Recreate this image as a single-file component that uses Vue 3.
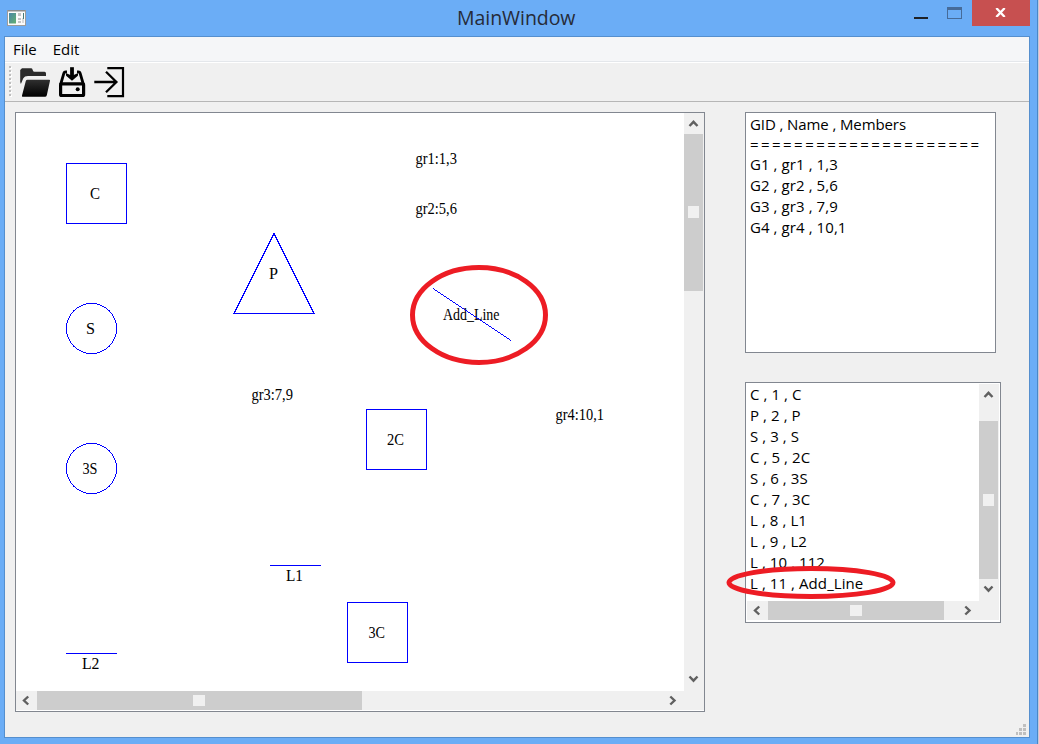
<script setup>
const groups = [
  { text: 'GID , Name , Members', kind: 'head' },
  { text: '=====================', kind: 'rule' },
  { text: 'G1 , gr1 , 1,3', kind: 'row' },
  { text: 'G2 , gr2 , 5,6', kind: 'row' },
  { text: 'G3 , gr3 , 7,9', kind: 'row' },
  { text: 'G4 , gr4 , 10,1', kind: 'row' },
]

const objects = [
  'C , 1 , C',
  'P , 2 , P',
  'S , 3 , S',
  'C , 5 , 2C',
  'S , 6 , 3S',
  'C , 7 , 3C',
  'L , 8 , L1',
  'L , 9 , L2',
  'L , 10 , 112',
  'L , 11 , Add_Line',
]

const squares = [
  { x: 66.5, y: 163.5 },
  { x: 366.5, y: 409.5 },
  { x: 347.5, y: 602.5 },
]

const circles = [
  { x: 91.5, y: 328.5 },
  { x: 91.5, y: 468.5 },
]

const labels = [
  { text: 'C', x: 90, y: 199, w: 10 },
  { text: 'S', x: 86, y: 334, w: 9 },
  { text: 'P', x: 269, y: 279, w: 9 },
  { text: '3S', x: 82.5, y: 474, w: 15 },
  { text: '2C', x: 387, y: 445, w: 17 },
  { text: '3C', x: 368.5, y: 638, w: 16.5 },
  { text: 'L1', x: 286, y: 581, w: 17 },
  { text: 'L2', x: 82, y: 669, w: 17.5 },
  { text: 'gr1:1,3', x: 415.5, y: 164, w: 41.5 },
  { text: 'gr2:5,6', x: 415.5, y: 214, w: 41.5 },
  { text: 'gr3:7,9', x: 251.5, y: 400, w: 41.5 },
  { text: 'gr4:10,1', x: 555.5, y: 420, w: 48.5 },
  { text: 'Add_Line', x: 443, y: 320, w: 56.5 },
]
</script>

<template>
  <div class="window">
    <header class="titlebar">
      <svg class="app-icon" width="19" height="16" viewBox="0 0 19 16">
        <defs>
          <linearGradient id="pane" x1="0" y1="0" x2="1" y2="1">
            <stop offset="0" stop-color="#4a86a8" />
            <stop offset="1" stop-color="#62b070" />
          </linearGradient>
        </defs>
        <rect x="0.5" y="0.5" width="18" height="15" fill="#fbfbfb" stroke="#9b9b9b" />
        <rect x="1" y="0" width="17" height="1.5" fill="#8c8c8c" />
        <rect x="2" y="3" width="7" height="10.5" fill="url(#pane)" />
        <rect x="11" y="3" width="3" height="3" fill="#c4c4c4" />
        <rect x="11" y="8" width="3" height="2" fill="#c4c4c4" />
        <rect x="11" y="11" width="3" height="2" fill="#c4c4c4" />
        <rect x="15" y="8" width="2" height="5" fill="#dadada" />
        <rect x="16" y="3" width="1" height="6" fill="#467a78" />
      </svg>
      <h1 class="title">MainWindow</h1>
      <div class="controls">
        <i class="minimize"></i>
        <i class="maximize"></i>
        <div class="close">
          <svg width="11" height="9" viewBox="0 0 11 9"><path d="M1.3 0L9.7 9M9.7 0L1.3 9" stroke="#fff" stroke-width="2.3" /></svg>
        </div>
      </div>
    </header>

    <div class="client">
      <nav class="menubar"><span>File</span><span class="edit">Edit</span></nav>
      <div class="toolbar">
        <svg width="130" height="38" viewBox="5 63 130 38">
          <defs>
            <linearGradient id="folder" x1="0" y1="0" x2="0" y2="1">
              <stop offset="0" stop-color="#303030" />
              <stop offset="1" stop-color="#000" />
            </linearGradient>
          </defs>
          <g v-for="n in 8" :key="n">
            <rect x="10" :y="63 + n * 4" width="2" height="2" fill="#fff" />
            <rect x="9" :y="62 + n * 4" width="2" height="2" fill="#bebebe" />
          </g>
          <path d="M20.2 70L22 68.3H31.3Q32.3 68.3 32.8 70.2Q33.2 71.8 34.5 71.8H44.5Q46 71.8 46 73.5V76H28Q24.5 76 23.3 78.3L20.9 84L20.2 82Z" fill="#2b2b2b" />
          <path d="M27.5 79.7H49.2Q50.3 79.7 50 80.8L46.8 95.2Q46.4 96.7 45 96.7H22.8Q21.6 96.7 22 95.4L25.8 81Q26.2 79.7 27.5 79.7Z" fill="url(#folder)" />
          <g fill="none" stroke="#000">
            <path d="M67 71.9H65.6Q64.2 71.9 63.9 73.2L60.6 84.5M77 71.9H78.4Q79.8 71.9 80.1 73.2L83.4 84.5" stroke-width="2.8" />
            <rect x="60.6" y="83.9" width="23" height="11.6" rx="1" stroke-width="3.2" />
            <path d="M72 67.2V77" stroke-width="3.8" />
          </g>
          <path d="M65.8 73L72 75.8L78.2 73L77.9 75.8L72 80.8L66.1 75.8Z" fill="#000" />
          <circle cx="77.7" cy="89.3" r="2" fill="#000" />
          <g fill="none" stroke="#000">
            <path d="M94.3 82H116.5M106 71.8L116.4 82L106 92.2" stroke-width="2.3" />
            <path d="M107.3 68.1H123V96.1H107.3" stroke-width="2.2" />
          </g>
        </svg>
      </div>

      <main class="workspace">
        <section class="canvas frame">
          <svg class="scene" width="668" height="578" viewBox="16 113 668 578">
            <g class="shapes">
              <rect v-for="(s, i) in squares" :key="'s' + i" :x="s.x" :y="s.y" width="60" height="60" />
              <circle v-for="(c, i) in circles" :key="'c' + i" :cx="c.x" :cy="c.y" r="25" />
              <path d="M274 233.5L314 313.5H234Z" />
              <path d="M270 565.5H321M66 653.5H117" />
            </g>
            <text
              v-for="l in labels"
              :key="l.text"
              class="label"
              :x="l.x"
              :y="l.y"
              :textLength="l.w"
              lengthAdjust="spacingAndGlyphs"
            >{{ l.text }}</text>
            <path class="shapes" d="M433 288.5L511 340.5" />
          </svg>
          <div class="vbar">
            <svg class="arrow" width="19" height="21"><path d="M5.5 13L9.5 8.8L13.5 13" /></svg>
            <div class="vthumb"><i></i></div>
            <svg class="arrow end" width="19" height="21"><path d="M5.5 6.5L9.5 10.7L13.5 6.5" /></svg>
          </div>
          <div class="hbar">
            <svg class="arrow" width="21" height="19"><path d="M12.2 5.5L8 9.5L12.2 13.5" /></svg>
            <div class="hthumb"><i></i></div>
            <svg class="arrow end" width="21" height="19"><path d="M7.3 5.5L11.5 9.5L7.3 13.5" /></svg>
          </div>
          <div class="corner"></div>
        </section>

        <aside class="side">
          <section class="groups frame">
            <div v-for="g in groups" :key="g.text" class="line" :class="g.kind"><span>{{ g.text }}</span></div>
          </section>
          <section class="objects frame">
            <div class="rows">
              <div v-for="o in objects" :key="o" class="line row"><span>{{ o }}</span></div>
            </div>
            <div class="vbar">
              <svg class="arrow" width="19" height="21"><path d="M5.5 13L9.5 8.8L13.5 13" /></svg>
              <div class="vthumb"><i></i></div>
              <svg class="arrow end" width="19" height="21"><path d="M5.5 6.5L9.5 10.7L13.5 6.5" /></svg>
            </div>
            <div class="hbar">
              <svg class="arrow" width="21" height="19"><path d="M12.2 5.5L8 9.5L12.2 13.5" /></svg>
              <div class="hthumb"><i></i></div>
              <svg class="arrow end" width="21" height="19"><path d="M7.3 5.5L11.5 9.5L7.3 13.5" /></svg>
            </div>
            <div class="corner"></div>
          </section>
        </aside>
      </main>
      <svg class="size-grip" width="10" height="11" viewBox="0 0 10 11" fill="#bfbfbf">
        <path d="M7 0h3v3h-3zM7 4h3v3h-3zM7 8h3v3h-3zM3 4h3v3h-3zM3 8h3v3h-3zM0 8h2v3h-2z" />
      </svg>
    </div>

    <svg class="marks" width="1039" height="744" viewBox="0 0 1039 744" fill="none" stroke="#ed1c24" stroke-width="5">
      <ellipse cx="479" cy="315" rx="66.5" ry="47.5" />
      <ellipse cx="811" cy="582.5" rx="82" ry="14" />
    </svg>
  </div>
</template>

<style>
body {
  margin: 0;
  overflow: hidden;
}
</style>

<style scoped>
.window {
  position: relative;
  box-sizing: border-box;
  width: 1039px;
  height: 744px;
  padding: 0 9px 6px 4px;
  background: #6badf6;
  box-shadow: inset -1px 0 #c5cbd8, inset -2px 0 #4a86c8;
  font-family: "Open Sans", "Noto Sans", sans-serif;
  color: #000;
}
.titlebar {
  display: flex;
  height: 36px;
}
.app-icon {
  margin: 10px 0 0 3px;
}
.title {
  margin: 0 0 0 431px;
  width: 140px;
  font-size: 19.5px;
  line-height: 36px;
  font-weight: 400;
  letter-spacing: -0.05px;
  color: #262b38;
}
.controls {
  display: flex;
  margin-left: auto;
}
.minimize {
  width: 14px;
  height: 2px;
  margin-top: 17px;
  background: #1e2126;
}
.maximize {
  box-sizing: border-box;
  width: 15px;
  height: 12px;
  margin: 7px 10px 0 19px;
  border: 1px solid #466b99;
  border-top-width: 3px;
}
.close {
  box-sizing: border-box;
  width: 58px;
  height: 26px;
  padding: 8px 0 0 23px;
  background: #c75050;
}
.close svg {
  display: block;
}
.client {
  position: relative;
  box-sizing: border-box;
  width: 1026px;
  height: 702px;
  border: 1px solid #558fce;
  background: #f0f0f0;
}
.menubar {
  height: 24px;
  padding-left: 8px;
  border-bottom: 1px solid #e4e7eb;
  background: #f5f6f8;
  font-size: 15px;
  line-height: 24px;
}
.menubar .edit {
  margin-left: 16px;
}
.toolbar {
  height: 38px;
  border-top: 1px solid #fff;
  border-bottom: 1px solid #b6b6b6;
}
.toolbar svg {
  display: block;
}
.workspace {
  display: flex;
  gap: 40px;
  padding: 10px 0 0 10px;
}
.frame {
  box-sizing: border-box;
  border: 1px solid #828790;
  background: #fff;
}
.canvas {
  display: grid;
  grid-template: 578px 20px / 668px 20px;
  width: 690px;
  height: 600px;
}
.scene {
  display: block;
}
.shapes {
  fill: none;
  stroke: #00f;
  stroke-width: 1px;
  shape-rendering: crispEdges;
}
.label {
  font-family: "Liberation Serif", serif;
  font-size: 16px;
  fill: #000;
}
.vbar,
.hbar {
  display: flex;
  background: #f0f0f0;
}
.vbar {
  flex-direction: column;
}
.hbar {
  height: 19px;
}
.corner {
  background: #f0f0f0;
  height: 19px;
}
.arrow {
  display: block;
  flex: none;
  fill: none;
  stroke: #606060;
  stroke-width: 2.4;
}
.arrow.end {
  margin-top: auto;
}
.hbar .arrow.end {
  margin: 0 0 0 auto;
}
.vthumb,
.hthumb {
  box-sizing: border-box;
  display: flex;
  align-items: center;
  justify-content: center;
  background: #cdcdcd;
}
.vthumb {
  width: 19px;
}
.vthumb i {
  width: 11px;
  height: 12px;
  background: #f0f0f0;
}
.hthumb i {
  width: 12px;
  height: 11px;
  background: #f0f0f0;
}
.canvas .vthumb {
  height: 157px;
  padding-bottom: 1px;
}
.canvas .hthumb {
  width: 325px;
  padding-right: 1px;
}
.side {
  display: flex;
  flex-direction: column;
  gap: 29px;
}
.groups {
  width: 251px;
  height: 241px;
  padding: 1px 4px;
}
.line {
  height: 21px;
  line-height: 21px;
  font-size: 15px;
  white-space: pre;
  letter-spacing: 0.08px;
}
.line.head {
  height: 20px;
  letter-spacing: -0.1px;
}
.line.rule {
  height: 20px;
  letter-spacing: 2.45px;
}
.objects {
  display: grid;
  grid-template: 217px 20px / 232px 20px;
  width: 256px;
  height: 241px;
  padding: 1px 0 0 1px;
}
.rows {
  padding-left: 3px;
}
.objects .vthumb {
  height: 158px;
  margin-top: 16px;
}
.objects .hthumb {
  width: 176px;
}
.size-grip {
  position: absolute;
  right: 3px;
  bottom: 2px;
}
.marks {
  position: absolute;
  left: 0;
  top: 0;
}
</style>
